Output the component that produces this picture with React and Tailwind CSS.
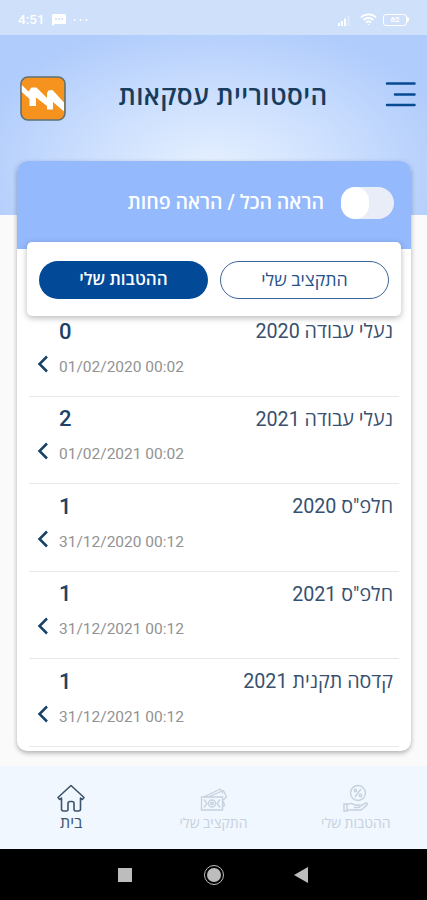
const transactions = [
  { name: "נעלי עבודה 2020", amount: 0, date: "01/02/2020 00:02" },
  { name: "נעלי עבודה 2021", amount: 2, date: "01/02/2021 00:02" },
  { name: 'חלפ"ס 2020', amount: 1, date: "31/12/2020 00:12" },
  { name: 'חלפ"ס 2021', amount: 1, date: "31/12/2021 00:12" },
  { name: "קדסה תקנית 2021", amount: 1, date: "31/12/2021 00:12" },
];

function StatusBar() {
  return (
    <div dir="ltr" className="flex h-[35px] items-center bg-[#cee0fa] pt-1 pr-[18px] pl-[18px] text-white">
      <span className="w-[27px] text-[13.500px] font-medium whitespace-nowrap">4:51</span>
      <svg className="ml-[7px]" width="14" height="12" viewBox="0 0 14 12">
        <path d="M1.500 0h11A1.500 1.500 0 0 1 14 1.500v7a1.500 1.500 0 0 1-1.500 1.500H3L0 12V1.500A1.500 1.500 0 0 1 1.500 0Z" fill="currentColor" />
        <path d="M3 5h8" stroke="#cee0fa" strokeWidth="1.300" strokeDasharray="2 1" />
      </svg>
      <svg className="ml-[7px]" width="15" height="4" viewBox="0 0 15 4" fill="currentColor">
        <circle cx="1.500" cy="2" r="1" />
        <circle cx="7.500" cy="2" r="1" />
        <circle cx="13.500" cy="2" r="1" />
      </svg>
      <svg className="ml-auto" width="15" height="12" viewBox="0 0 15 12" fill="currentColor">
        <path d="M0 9h2v3H0zM3 7h2v5H3zM6 4.500h2V12H6z" />
        <path d="M9.500 2h2v10h-2z" opacity=".35" />
      </svg>
      <svg className="ml-[7px]" width="17" height="13" viewBox="0 0 17 13" fill="none" stroke="currentColor" strokeWidth="1.800">
        <path d="M1 4.300a11 11 0 0 1 15 0M3.500 7a7.300 7.300 0 0 1 10 0M6 9.500a3.700 3.700 0 0 1 5 0" />
        <circle cx="8.500" cy="11.500" r=".8" fill="currentColor" stroke="none" />
      </svg>
      <div className="ml-[6px] flex items-center">
        <span className="flex h-[12px] w-[24px] items-center justify-center rounded-[3px] border-[1.500px] border-white text-[8px] leading-none font-bold">
          62
        </span>
        <span className="h-[5px] w-[2px] rounded-r-sm bg-white" />
      </div>
    </div>
  );
}

function Logo() {
  return (
    <svg width="46" height="45" viewBox="0 0 46 45">
      <rect x="1" y="1" width="44" height="43" rx="7" fill="#f6921e" stroke="#5f7077" strokeWidth="1.600" />
      <path
        d="M1.800 9 8.500 15.500 9.500 14 11.500 11.500H16.500L27 22V17L28.500 14.500 32.500 14 44 26.500V35.500L33 26V33.500H27V30L16 21.500V30H9.500V23L1.800 16Z"
        fill="#fff"
      />
    </svg>
  );
}

function MenuIcon() {
  return (
    <svg width="31" height="26" viewBox="0 0 31 26" stroke="#064a92" strokeWidth="2.500" strokeLinecap="round">
      <path d="M2 2.500h27.500M10 13.500h19.500M2 24h27.500" />
    </svg>
  );
}

function Header() {
  return (
    <header className="flex h-[180px] items-start justify-between bg-[radial-gradient(ellipse_250px_150px_at_50%_75%,#e6f1ff_0%,#cfe1fe_45%,#b0ccfc_100%)] pr-[11px] pl-[20px]">
      <button className="mt-[46px]" aria-label="תפריט">
        <MenuIcon />
      </button>
      <h1 className="mt-[43px] mr-[5px] text-[26px] leading-[36px] font-semibold tracking-[0.400px] text-[#183c5c]">היסטוריית עסקאות</h1>
      <div className="mt-[41px]">
        <Logo />
      </div>
    </header>
  );
}

function Toggle() {
  return (
    <span className="flex h-[32px] w-[53px] justify-end rounded-full bg-[#e9edf8]">
      <span className="h-[32px] w-[28px] rounded-full bg-white" />
    </span>
  );
}

function Transaction({ name, amount, date }) {
  return (
    <li className="flex h-[87.500px] justify-between border-b border-[#e5e8ec] pr-[6px] pl-[7px]">
      <p className="pt-[10px] text-[19.700px] leading-[26px] text-[#37506f]">{name}</p>
      <div dir="ltr" className="flex items-end pb-[20px]">
        <svg className="mb-[3px]" width="14" height="18" viewBox="0 0 14 18" fill="none" stroke="#174268" strokeWidth="2.500">
          <path d="M11 1.500 3.500 9 11 16.500" />
        </svg>
        <div className="ml-[9px]">
          <p className="mb-[14px] text-[22px] leading-[24px] font-medium text-[#1d4268]">{amount}</p>
          <p className="text-[15.500px] leading-[18px] text-[#929292]">{date}</p>
        </div>
      </div>
    </li>
  );
}

function HomeIcon() {
  return (
    <svg width="28" height="28" viewBox="0 0 28 28" fill="none" stroke="#3c536c" strokeWidth="1.600" strokeLinejoin="round">
      <path d="M14 1.500 1 13.500l1.700 2L4.500 14v11q0 2 2 2h3q1.500 0 1.500-2v-5.500q0-2 2-2h2q2 0 2 2V25q0 2 1.500 2h3q2 0 2-2V14l1.800 1.500 1.700-2Z" />
    </svg>
  );
}

function BudgetIcon() {
  return (
    <svg width="28" height="25" viewBox="0 0 28 25" fill="none" stroke="currentColor" strokeWidth="1.300">
      <path d="M1.500 10h21v13h-21zM3.500 10l17-8 2.500 4.500M8 10l15.500-6.500 3 6.500-4 3.500M22.500 20l2-1.500-1-4" />
      <circle cx="12" cy="16.500" r="3.500" />
      <path d="m4 12.500 3 4-3 4M20 12.500l-3 4 3 4M11 15.500h2v2h-2z" />
    </svg>
  );
}

function BenefitsIcon() {
  return (
    <svg width="26" height="28" viewBox="0 0 26 28" fill="none" stroke="currentColor" strokeWidth="1.400">
      <circle cx="15" cy="9" r="7.500" />
      <path d="m12 13 6-8" />
      <circle cx="12.500" cy="6.500" r="1.200" />
      <circle cx="17.500" cy="11.500" r="1.200" />
      <path d="M1 20h3v7H1zM4 21c4-3 6-1 8 0h4q2 1 0 2.500H11M17 22l6-3q2 0 1 2l-6 5H4" />
    </svg>
  );
}

function NavItem({ icon, label, active }) {
  return (
    <button className={`flex flex-1 flex-col items-center ${active ? "text-[#3c536c]" : "text-[#c5d1de]"}`}>
      <span className="flex h-[29px] items-end">{icon}</span>
      <span className={`pt-px leading-[20px] whitespace-nowrap ${active ? "text-[16px]" : "text-[14px]"}`}>{label}</span>
    </button>
  );
}

function SystemBar() {
  return (
    <div dir="ltr" className="flex h-[51px] items-center bg-black pl-[118px]">
      <span className="size-[14px] bg-[#bdbdbd]" />
      <span className="ml-[72px] flex size-[20px] items-center justify-center rounded-full border-[1.500px] border-[#bdbdbd]">
        <span className="size-[14px] rounded-full bg-[#bdbdbd]" />
      </span>
      <svg className="ml-[70px]" width="14" height="16" viewBox="0 0 14 16">
        <path d="M14 0v16L0 8Z" fill="#bdbdbd" />
      </svg>
    </div>
  );
}

export default function App() {
  return (
    <div dir="rtl" className="flex h-[900px] w-[427px] flex-col overflow-hidden bg-[#fafafa] font-[Roboto,'Open_Sans',sans-serif]">
      <StatusBar />
      <Header />

      <main className="relative mr-[16px] ml-[17px] -mt-[54px] h-[590px] rounded-[10px] bg-white shadow-[0_2px_5px_rgba(0,0,0,0.3)]">
        <div className="flex h-[88px] items-start rounded-t-[10px] bg-[#94b9fc] pt-[26px] pr-[17px]">
          <Toggle />
          <span className="mr-[17px] text-[19.500px] leading-[31px] font-semibold text-white">הראה הכל / הראה פחות</span>
        </div>

        <div className="relative z-10 mx-[10px] -mt-[7px] flex h-[74px] items-center justify-between rounded-[5px] bg-white px-[12px] pt-px shadow-[0_2px_6px_rgba(0,0,0,0.28)]">
          <button className="h-[38px] w-[169px] rounded-full border border-[#3c649c] pt-px text-[17.800px] text-[#28528c]">התקציב שלי</button>
          <button className="h-[38px] w-[169px] rounded-full bg-[#024a98] pt-px text-[17px] font-semibold text-white">ההטבות שלי</button>
        </div>

        <ul className="mx-[12px] -mt-[7px]">
          {transactions.map((item, i) => (
            <Transaction key={i} {...item} />
          ))}
        </ul>
      </main>

      <nav className="mt-[15px] flex h-[83px] bg-[#f1f7fe] pt-[17px]">
        <NavItem icon={<BenefitsIcon />} label="ההטבות שלי" />
        <NavItem icon={<BudgetIcon />} label="התקציב שלי" />
        <NavItem icon={<HomeIcon />} label="בית" active />
      </nav>
      <SystemBar />
    </div>
  );
}
